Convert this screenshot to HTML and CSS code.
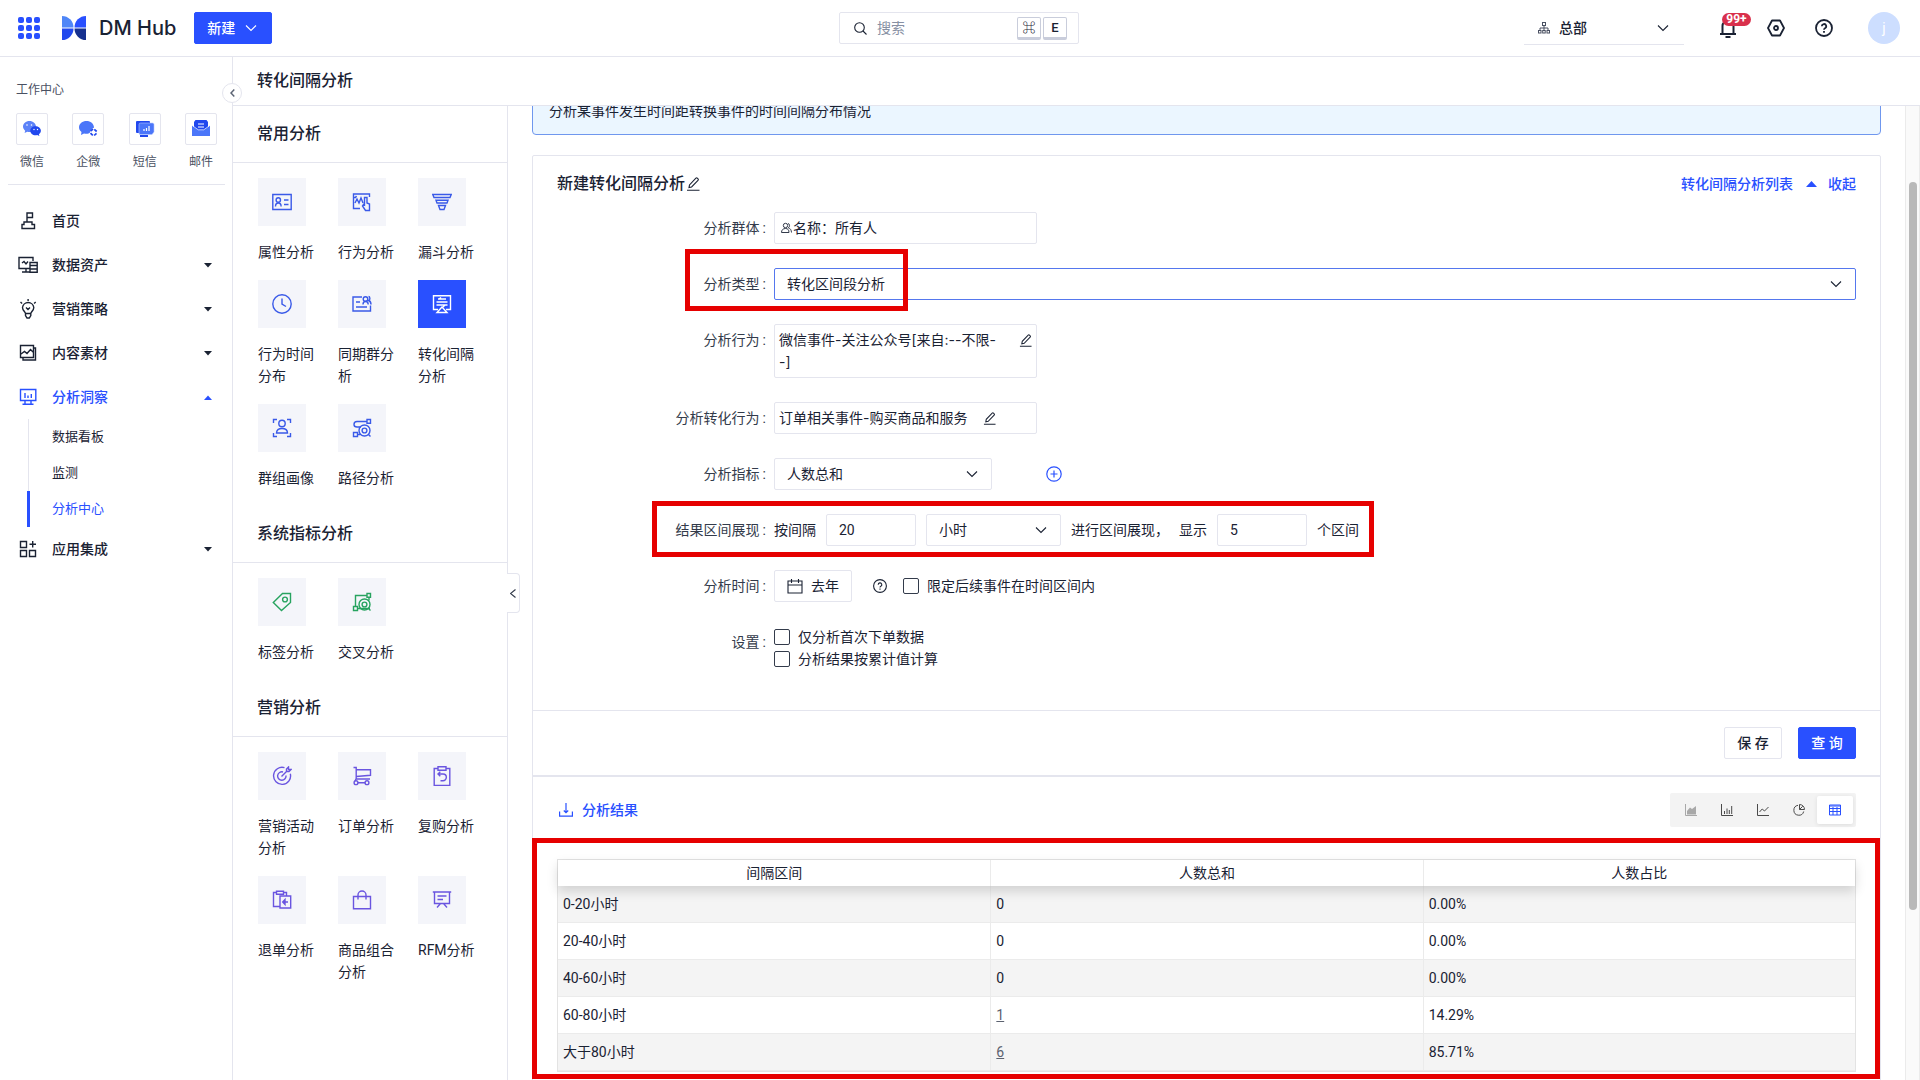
FILE: index.html
```html
<!DOCTYPE html>
<html lang="zh-CN">
<head>
<meta charset="utf-8">
<meta name="viewport" content="width=device-width, initial-scale=1">
<title>转化间隔分析 - DM Hub</title>
<link rel="stylesheet" href="styles.css">
</head>
<body>
<svg class="defs" aria-hidden="true">
  <symbol id="chevron" viewBox="0 0 12 12"><path d="M1 3.5l5 5 5-5"/></symbol>
  <symbol id="pencil" viewBox="0 0 14 14"><path d="M1 13.2h12.5M3 10.6l.5-2.7L9.900 1.200a1 1 0 0 1 1.400 0l.7.700a1 1 0 0 1 0 1.400L5.600 10z"/></symbol>
  <symbol id="caret" viewBox="0 0 8 5"><path d="M0 0h8L4 4.500z"/></symbol>
</svg>

<header class="topbar">
  <div class="topbar-left">
    <button class="icon-btn apps" aria-label="应用">
      <svg width="22" height="22" viewBox="0 0 22 22" fill="#2950ff"><rect width="6" height="6" rx="2"/><rect x="8" width="6" height="6" rx="2"/><rect x="16" width="6" height="6" rx="2"/><rect y="8" width="6" height="6" rx="2"/><rect x="8" y="8" width="6" height="6" rx="2"/><rect x="16" y="8" width="6" height="6" rx="2"/><rect y="16" width="6" height="6" rx="2"/><rect x="8" y="16" width="6" height="6" rx="2"/><rect x="16" y="16" width="6" height="6" rx="2"/></svg>
    </button>
    <a class="brand" href="#">
      <svg width="24" height="24" viewBox="0 0 24 24"><path d="M0 0a11.500 11.500 0 0 1 11.500 11.500H0z" fill="#4f86f7"/><path d="M24 0a11.500 11.500 0 0 0-11.500 11.500H24z" fill="#2950ff"/><path d="M0 24a11.500 11.500 0 0 0 11.500-11.500H0z" fill="#2148ee"/><path d="M24 24a11.500 11.500 0 0 1-11.500-11.500H24z" fill="#16318f"/></svg>
      <span>DM Hub</span>
    </a>
    <button class="btn btn-primary btn-new">新建<svg class="line" width="12" height="12"><use href="#chevron"/></svg></button>
  </div>
  <label class="search">
    <svg class="line" width="13" height="13" viewBox="0 0 13 13"><circle cx="5.500" cy="5.500" r="4.800"/><path d="M9 9l3.500 3.500"/></svg>
    <input type="text" placeholder="搜索" aria-label="搜索">
    <kbd>⌘</kbd><kbd>E</kbd>
  </label>
  <div class="topbar-right">
    <button class="org">
      <svg width="12" height="12" viewBox="0 0 12 12" fill="none" stroke="#4a5162"><rect x="4.500" y=".5" width="3" height="3"/><path d="M6 3.500V9M2 8.500V6h8v2.500"/><rect x=".5" y="8.500" width="2.500" height="2.500"/><rect x="4.700" y="8.500" width="2.500" height="2.500"/><rect x="9" y="8.500" width="2.500" height="2.500"/></svg>
      <span>总部</span>
      <svg class="line" width="12" height="12"><use href="#chevron"/></svg>
    </button>
    <button class="icon-btn bell" aria-label="通知">
      <svg width="18" height="20" viewBox="0 0 18 20" fill="none" stroke="#1a2233" stroke-width="2"><path d="M1 16h16M3.500 16V8a5.500 5.500 0 0 1 11 0v8M6.500 19h5"/></svg>
      <span class="badge">99+</span>
    </button>
    <button class="icon-btn gear" aria-label="设置">
      <svg width="18" height="18" viewBox="0 0 18 18" fill="none" stroke="#1a2233" stroke-width="1.800"><path d="M5 1.500h8L17 9l-4 7.500H5L1 9z" stroke-linejoin="round"/><circle cx="9" cy="9" r="2"/></svg>
    </button>
    <button class="icon-btn help" aria-label="帮助">
      <svg width="18" height="18" viewBox="0 0 18 18" fill="none" stroke="#1a2233" stroke-width="1.800"><circle cx="9" cy="9" r="8"/><path d="M6.800 7.200a2.200 2.200 0 1 1 3.200 2c-.700.400-1 .700-1 1.500M9 12v1.800"/></svg>
    </button>
    <button class="avatar">j</button>
  </div>
</header>

<div class="shell">
  <aside class="sidebar">
    <button class="fold" aria-label="收起菜单"><svg width="5" height="8" viewBox="0 0 5 8"><path d="M4.300.6L1 4l3.300 3.400" fill="none" stroke="#5c6474" stroke-width="1.500"/></svg></button>
    <h2 class="work-title">工作中心</h2>
    <div class="works">
      <a href="#"><span class="work-icon"><svg width="20" height="18" viewBox="0 0 20 18"><path d="M7.500 1C3.700 1 1 3.500 1 6.500c0 1.700.9 3.200 2.200 4.200L2.600 13l2.700-1.300c.7.200 1.400.3 2.200.3C11 12 14 9.500 14 6.500S11 1 7.500 1z" fill="#5c82f8"/><path d="M13.500 6.200C10.600 6.200 8.300 8.200 8.300 10.700s2.300 4.500 5.200 4.500c.6 0 1.200-.1 1.700-.2l2.200 1-.5-1.800c1.200-.8 2-2 2-3.500 0-2.500-2.500-4.500-5.400-4.500z" fill="#2148ee"/><g fill="#fff"><circle cx="5" cy="5" r=".8"/><circle cx="9.500" cy="5" r=".8"/><circle cx="12" cy="9.500" r=".7"/><circle cx="15.500" cy="9.500" r=".7"/></g></svg></span>微信</a>
      <a href="#"><span class="work-icon"><svg width="20" height="18" viewBox="0 0 20 18"><path d="M8.500 1C4.500 1 1 3.700 1 7.300c0 2 1 3.700 2.500 4.800L3 15l3-1.600c3 .8 5 0 6-1 0-2 2-4.400 4-4.600C16 3.700 12.500 1 8.500 1z" fill="#4b76f9"/><g fill="none" stroke="#2148ee" stroke-width="1.700"><path d="M12.500 11.200l2.500-2.200M16.300 9.300l2.400 2.200M18.500 13.300l-2.300 2.200M14.800 15.300l-2.300-2.200"/></g></svg></span>企微</a>
      <a href="#"><span class="work-icon"><svg width="20" height="18" viewBox="0 0 20 18"><rect x="1" y="1" width="14" height="12" rx="1" fill="#2148ee"/><path d="M5 15h8v2H5z" fill="#2148ee"/><path d="M5.500 3h12A1.500 1.500 0 0 1 19 4.500V12l-2 2.500H5.500A1.500 1.500 0 0 1 4 13V4.500A1.500 1.500 0 0 1 5.500 3z" fill="#4b76f9" stroke="#b5c7ff" stroke-width=".6"/><path d="M9 11V9M11.500 11V8M14 11V6" stroke="#fff" stroke-width="1.200"/></svg></span>短信</a>
      <a href="#"><span class="work-icon"><svg width="20" height="18" viewBox="0 0 20 18"><path d="M4.500 0h11L17 2v9H3V2z" fill="#2148ee"/><path d="M7 4h6M7 7h6" stroke="#fff" stroke-width="1.200"/><path d="M1 5.500l6 4.500h6l6-4.500V16H1z" fill="#4b76f9"/><path d="M1.300 5.500l5.900 4.300h5.600l5.900-4.300" fill="none" stroke="#fff" stroke-width=".7"/></svg></span>邮件</a>
    </div>
    <nav class="nav">
      <a class="nav-item" href="#"><svg width="20" height="20" viewBox="0 0 20 20"><path d="M9 11V2h5.500v4.500H9M4 17.500v-4h2V11h8v2.500h2.500v4z"/></svg><span>首页</span></a>
      <a class="nav-item" href="#"><svg width="20" height="20" viewBox="0 0 20 20"><path d="M12 13.500H1v-11h14V6M4 17h8M8 13.500V17M4 8l2-1.500L8 9l2-2.500M12 7.500h7.200v9.800H12zM12 10.500h7.200M12 14h7.200"/></svg><span>数据资产</span><svg class="caret" width="8" height="5"><use href="#caret"/></svg></a>
      <a class="nav-item" href="#"><svg width="20" height="20" viewBox="0 0 20 20"><path d="M7.500 14.500c0-1.500-3-3-3-6a5.700 5.700 0 0 1 11.300 0c0 3-3 4.500-3 6zM7.500 14.500v2l1.500 2.500h2.300l1.500-2.500v-2M8 8.500l2 2 2-2M10.100 0v2M2.500 3l1.600 1.500M17.700 3l-1.600 1.500"/></svg><span>营销策略</span><svg class="caret" width="8" height="5"><use href="#caret"/></svg></a>
      <a class="nav-item" href="#"><svg width="20" height="20" viewBox="0 0 20 20"><path d="M2.500 2.500h13v12h-13zM15.500 5h2v12H5v-2.500M3 11l3.500-2.500L9 10.500l3.500-4 3 3"/></svg><span>内容素材</span><svg class="caret" width="8" height="5"><use href="#caret"/></svg></a>
      <a class="nav-item active" href="#"><svg width="20" height="20" viewBox="0 0 20 20"><path d="M2.500 2.500h15.300v11H2.500zM7 13.500V17M13 13.500V17M4.500 17.300h11M7 6v5M10 8.500V11M13.300 7v4"/></svg><span>分析洞察</span><svg class="caret up" width="8" height="5"><use href="#caret"/></svg></a>
      <div class="subnav">
        <a href="#">数据看板</a>
        <a href="#">监测</a>
        <a class="current" href="#">分析中心</a>
      </div>
      <a class="nav-item" href="#"><svg width="20" height="20" viewBox="0 0 20 20"><path d="M2.500 2.500h6v6h-6zM2.500 11.500h6v6h-6zM11.500 11.500h6v6h-6zM14.700 2v6.500M11.500 5.200H18"/></svg><span>应用集成</span><svg class="caret" width="8" height="5"><use href="#caret"/></svg></a>
    </nav>
  </aside>

  <main class="page">
    <h1 class="page-title">转化间隔分析</h1>
    <div class="page-body">
      <section class="catalog">
        <button class="catalog-fold" aria-label="收起分类"><svg width="6" height="9" viewBox="0 0 6 9"><path d="M5.500.5l-5 4 5 4" fill="none" stroke="#333b4b" stroke-width="1.200"/></svg></button>
        <h2>常用分析</h2>
        <div class="tiles">
          <a href="#"><span class="tile"><svg width="20" height="20" viewBox="0 0 20 20"><path d="M.8 2.500h18.400v15H.8zM3.500 14.500c0-2 1-3.500 2.800-3.500s2.800 1.500 2.800 3.500M12 8h4.500M12 12.500h4.500"/><circle cx="6.300" cy="8" r="2.200"/></svg></span>属性分析</a>
          <a href="#"><span class="tile"><svg width="20" height="20" viewBox="0 0 20 20"><path d="M8 16.500H1.500V2h16v3M1.500 5.500h2l1-1.500M3 11l2-4 2 4 2-5 2 5M12.500 13V5.500h2.500V11l2.500 1v6.500h-4L10.500 14l1-1.500z"/></svg></span>行为分析</a>
          <a href="#"><span class="tile"><svg width="20" height="20" viewBox="0 0 20 20"><path d="M.8 2.500h18.400l-1.200 3H2zM4 8.300h12l-1 2.700H5zM6.500 13.500h7l-1.500 4H8z"/></svg></span>漏斗分析</a>
          <a href="#"><span class="tile"><svg width="20" height="20" viewBox="0 0 20 20"><circle cx="10" cy="10" r="9.200"/><path d="M10 4.500V10l4 2.500"/></svg></span>行为时间分布</a>
          <a href="#"><span class="tile"><svg width="20" height="20" viewBox="0 0 20 20"><path d="M10 3H1v14h17.500v-5.500M4 8h4M4 13h11M11 10.500c0-2 1-3 2.500-3s2.700 1 2.700 3M16.500 2.500c1.500 0 2.200 3.500 0 4 1.700.5 2.500 1.500 2.500 4"/><circle cx="13.500" cy="5" r="2.300"/></svg></span>同期群分析</a>
          <a href="#" class="selected"><span class="tile"><svg width="20" height="20" viewBox="0 0 20 20"><path d="M6 15.500H1.500V1.800h17v13.700H14M4.500 8h11M6 5h8M4.500 11h11M7 5l2-1.500M13 11l-2 2M10 13l-5 5.500h10z"/></svg></span>转化间隔分析</a>
          <a href="#"><span class="tile"><svg width="20" height="20" viewBox="0 0 20 20"><path d="M1.500 5V1.500H5M15 1.500h3.500V5M1.500 15v3.500H5M15 18.500h3.500V15M4.500 15c0-3 2-4.500 5.500-4.500s5.500 1.500 5.500 4.500z"/><circle cx="10" cy="5.500" r="3.200"/></svg></span>群组画像</a>
          <a href="#"><span class="tile"><svg width="20" height="20" viewBox="0 0 20 20"><path d="M15 1.500h3.500v3.800H15zM1.500 14.500h4v4h-4zM15 3.500H5a3 3 0 0 0-3 3c0 2 1.500 2.500 3 2.500h4M5.500 16.500H8M16.500 16.500l2 2"/><circle cx="12.500" cy="12.500" r="5.500"/><circle cx="12.500" cy="12.500" r="2.400"/></svg></span>路径分析</a>
        </div>
        <h2>系统指标分析</h2>
        <div class="tiles green">
          <a href="#"><span class="tile"><svg width="20" height="20" viewBox="0 0 20 20"><path d="M1.300 10.500L10.500 1.500h8v9l-9 8z"/><circle cx="13" cy="7.500" r="2.400"/></svg></span>标签分析</a>
          <a href="#"><span class="tile"><svg width="20" height="20" viewBox="0 0 20 20"><path d="M15 1.500h3.500v3.800H15zM1.500 14.500h4v4h-4zM15 3.500H3.500v11M17 5.500v3M5.500 16.500H18M16.500 16.500l2 2"/><circle cx="12.500" cy="12.500" r="5.500"/><circle cx="12.500" cy="12.500" r="2.400"/></svg></span>交叉分析</a>
        </div>
        <h2>营销分析</h2>
        <div class="tiles purple">
          <a href="#"><span class="tile"><svg width="20" height="20" viewBox="0 0 20 20"><path d="M12.500 1.700a8.500 8.500 0 1 0 5.800 6M11 6a4.200 4.200 0 1 0 3 3.500M9.500 10.500l5-5M14.500 5.500V3l2-2v2.500H19l-2 2z"/></svg></span>营销活动分析</a>
          <a href="#"><span class="tile"><svg width="20" height="20" viewBox="0 0 20 20"><path d="M1.500 1.500h2.700v11.500H18M4.200 3.800h14.300v5.500L4.200 10.500M4 13l-1 2M6 16.700h7"/><circle cx="4" cy="16.700" r="1.900"/><circle cx="15" cy="16.700" r="1.900"/></svg></span>订单分析</a>
          <a href="#"><span class="tile"><svg width="20" height="20" viewBox="0 0 20 20"><path d="M6 2.500H2.200v17h15.600v-17H14M6 .8h8v3.400H6zM6 8h5a3.300 3.300 0 0 1 0 6.700H8.500M8.300 5.800L6 8l2.300 2.300"/></svg></span>复购分析</a>
          <a href="#"><span class="tile"><svg width="20" height="20" viewBox="0 0 20 20"><path d="M7.500 16.500H1.500v-14h3M11.500 2.500H14.500V6M4.500 1.200h7v3h-7zM8 6h10.700v12H8zM16 12h-5M13 9.500L10.700 12l2.300 2.500z"/></svg></span>退单分析</a>
          <a href="#"><span class="tile"><svg width="20" height="20" viewBox="0 0 20 20"><path d="M1.500 6.500h17v12.300h-17zM6 9.500V5a4 4 0 0 1 8 0v4.500"/></svg></span>商品组合分析</a>
          <a href="#" class="single"><span class="tile"><svg width="20" height="20" viewBox="0 0 20 20"><path d="M.8 2h18.400M2.500 2v11.500h15V2M5.500 6h9M5.500 9.500h5.500M8.500 13.500l-3.500 4M11.500 13.500l3.500 4"/></svg></span>RFM分析</a>
        </div>
      </section>

      <section class="content">
        <div class="notice">分析某事件发生时间距转换事件的时间间隔分布情况</div>
        <div class="card">
          <div class="card-head">
            <h2>新建转化间隔分析<svg class="line" width="14" height="14"><use href="#pencil"/></svg></h2>
            <div class="card-links">
              <a href="#">转化间隔分析列表</a>
              <a href="#"><svg width="11" height="6" viewBox="0 0 11 6"><path d="M0 6l5.500-6L11 6z" fill="#2950ff"/></svg>收起</a>
            </div>
          </div>
          <form class="form">
            <div class="row">
              <span class="label">分析群体</span>
              <div class="box box-wide people"><svg width="11" height="12" viewBox="0 0 11 12" fill="none" stroke="#333b4b"><circle cx="4.500" cy="3.500" r="2.200"/><path d="M.5 10.500c0-2.500 1.500-4 4-4s3.500 1.500 3.500 4zM7 1.500c2 .2 2 3.500.3 4.300 2 .6 3 2 3.200 4.700"/></svg>名称：所有人</div>
            </div>
            <div class="row">
              <label class="label" for="type">分析类型</label>
              <div class="select focus"><select id="type"><option>转化区间段分析</option></select><svg class="line" width="12" height="12"><use href="#chevron"/></svg></div>
              <i class="mark mark-type"></i>
            </div>
            <div class="row top">
              <span class="label">分析行为</span>
              <div class="box box-wide event"><span>微信事件-关注公众号[来自:--不限-<br>-]</span><svg class="line" width="13" height="13"><use href="#pencil"/></svg></div>
            </div>
            <div class="row">
              <span class="label">分析转化行为</span>
              <div class="box box-wide target"><span>订单相关事件-购买商品和服务</span><svg class="line" width="13" height="13"><use href="#pencil"/></svg></div>
            </div>
            <div class="row">
              <label class="label" for="metric">分析指标</label>
              <div class="select select-metric"><select id="metric"><option>人数总和</option></select><svg class="line" width="12" height="12"><use href="#chevron"/></svg></div>
              <button type="button" class="icon-btn add" aria-label="添加指标"><svg width="16" height="16" viewBox="0 0 16 16" fill="none" stroke="#2950ff" stroke-width="1.200"><circle cx="8" cy="8" r="7.200"/><path d="M8 4.500v7M4.500 8h7"/></svg></button>
            </div>
            <div class="row">
              <span class="label">结果区间展现</span>
              <div class="range">
                <label for="step">按间隔</label>
                <input id="step" type="text" value="20">
                <div class="select select-unit"><select aria-label="单位"><option>小时</option></select><svg class="line" width="12" height="12"><use href="#chevron"/></svg></div>
                <span>进行区间展现，</span>
                <label for="count">显示</label>
                <input id="count" type="text" value="5">
                <span>个区间</span>
              </div>
              <i class="mark mark-range"></i>
            </div>
            <div class="row">
              <span class="label">分析时间</span>
              <button type="button" class="btn btn-date"><svg class="line" width="16" height="16" viewBox="0 0 16 16"><path d="M1 3h14v12H1zM1 7h14M4.500 1v4M11.500 1v4"/></svg>去年</button>
              <svg class="line hint" width="14" height="14" viewBox="0 0 14 14"><circle cx="7" cy="7" r="6.400"/><path d="M5.200 5.700a1.800 1.800 0 1 1 2.600 1.600c-.6.300-.8.600-.8 1.200M7 9.500v1.200"/></svg>
              <label class="check"><input type="checkbox">限定后续事件在时间区间内</label>
            </div>
            <div class="row top">
              <span class="label">设置</span>
              <div class="checks">
                <label class="check"><input type="checkbox">仅分析首次下单数据</label>
                <label class="check"><input type="checkbox">分析结果按累计值计算</label>
              </div>
            </div>
          </form>
          <div class="actions">
            <button class="btn">保 存</button>
            <button class="btn btn-primary">查 询</button>
          </div>
          <div class="result-head">
            <a href="#"><svg width="14" height="14" viewBox="0 0 14 14" fill="none" stroke="#2950ff" stroke-width="1.200"><path d="M.6 8.500v4.700h12.800V8.500M7 0v9.500M4.800 7.500L7 9.700l2.200-2.200"/></svg>分析结果</a>
            <div class="chart-types">
              <button aria-label="面积图" class="off"><svg width="12" height="12" viewBox="0 0 12 12"><path d="M.5 0v11.500H12"/><path d="M2 10.500V7l3-3.500 2 1.500 4-3v8.500z" class="solid"/></svg></button>
              <button aria-label="柱状图"><svg width="12" height="12" viewBox="0 0 12 12"><path d="M.5 0v11.500H12M3.500 10V7M6 10V4.500M8.300 10V6M10.700 10V2"/></svg></button>
              <button aria-label="折线图"><svg width="12" height="12" viewBox="0 0 12 12"><path d="M.5 0v11.500H12M2.500 8l2.700-3 2.300 2L11.500 3"/></svg></button>
              <button aria-label="饼图"><svg width="12" height="12" viewBox="0 0 12 12"><path d="M5 1.300a5 5 0 1 0 5.700 6.200"/><path d="M6.500.5v5h5A5 5 0 0 0 6.500.5zM6.500 5.500l3.200-3.200"/></svg></button>
              <button aria-label="表格" class="on"><svg width="12" height="12" viewBox="0 0 12 12"><path d="M.5 1h11v10H.5zM.5 2h11M.5 4.500h11M.5 7.500h11M4 3v8M8 3v8"/></svg></button>
            </div>
          </div>
          <div class="result">
            <i class="mark mark-result"></i>
            <table>
              <thead><tr><th>间隔区间</th><th>人数总和</th><th>人数占比</th></tr></thead>
              <tbody>
                <tr><td>0-20小时</td><td>0</td><td>0.00%</td></tr>
                <tr><td>20-40小时</td><td>0</td><td>0.00%</td></tr>
                <tr><td>40-60小时</td><td>0</td><td>0.00%</td></tr>
                <tr><td>60-80小时</td><td><a href="#">1</a></td><td>14.29%</td></tr>
                <tr><td>大于80小时</td><td><a href="#">6</a></td><td>85.71%</td></tr>
              </tbody>
            </table>
          </div>
        </div>
      </section>
      <div class="scrollbar"><i></i></div>
    </div>
  </main>
</div>
</body>
</html>
```
FILE: styles.css
```css
:root {
  --ink: #1a2233;
  --blue: #2950ff;
  --line: #e4e5ee;
  --red: #e60000;
}
* { box-sizing: border-box; }
body {
  margin: 0;
  height: 100vh;
  display: flex;
  flex-direction: column;
  overflow: hidden;
  background: #fff;
  color: var(--ink);
  font: 14px/22px Roboto, "Noto Sans CJK SC", sans-serif;
}
h1, h2 { margin: 0; font-size: 16px; font-weight: 500; line-height: 24px; }
a { color: inherit; text-decoration: none; }
button, input, select { font: inherit; color: inherit; }
button { padding: 0; border: 0; background: none; }
svg { flex: none; display: block; }
.defs { position: absolute; width: 0; height: 0; }
.line { fill: none; stroke: currentColor; stroke-width: 1.1; }
.icon-btn { position: relative; display: flex; }

.btn {
  height: 32px;
  padding: 0 12px;
  border: 1px solid var(--line);
  border-radius: 2px;
  background: #fff;
  font-weight: 500;
}
.btn-primary { background: var(--blue); border-color: var(--blue); color: #fff; }

/* top bar */
.topbar {
  flex: none;
  display: grid;
  grid-template-columns: 1fr 240px 1fr;
  align-items: center;
  height: 57px;
  padding: 0 20px 0 18px;
  border-bottom: 1px solid var(--line);
}
.topbar-left, .topbar-right { display: flex; align-items: center; }
.topbar-right { justify-content: flex-end; }
.brand {
  display: flex;
  align-items: center;
  gap: 13px;
  margin: 0 18px 0 22px;
  font: 500 20px/28px Inter, sans-serif;
}
.btn-new { display: flex; align-items: center; gap: 10px; padding: 0 14px 0 12px; }
.search {
  display: flex;
  align-items: center;
  gap: 2px;
  height: 32px;
  padding: 0 11px 0 14px;
  border: 1px solid var(--line);
  border-radius: 2px;
}
.search input { flex: 1; min-width: 0; padding: 0 8px; border: 0; outline: 0; background: none; }
.search input::placeholder { color: #8790a3; opacity: 1; }
kbd {
  width: 24px;
  height: 23px;
  border: 1px solid #c9cddb;
  border-bottom-width: 3px;
  border-radius: 2px;
  font: 500 13px/19px Roboto, "Noto Sans CJK SC", "DejaVu Sans", sans-serif;
  text-align: center;
}
.org {
  display: flex;
  align-items: center;
  gap: 9px;
  width: 160px;
  height: 33px;
  padding: 0 15px 0 14px;
  border-bottom: 1px solid var(--line);
  font-weight: 500;
}
.org span { flex: 1; text-align: left; }
.bell { margin-left: 35px; }
.badge {
  position: absolute;
  top: -5px;
  left: 3px;
  width: 29px;
  height: 13px;
  border-radius: 7px;
  background: #d9304c;
  color: #fff;
  font: 700 12px/13px Roboto, sans-serif;
}
.gear, .help { margin-left: 30px; }
.avatar {
  width: 32px;
  height: 32px;
  margin-left: 35px;
  border-radius: 50%;
  background: #cddeff;
  color: #fff;
}

.shell { flex: 1; min-height: 0; display: flex; }

/* side navigation */
.sidebar {
  position: relative;
  flex: none;
  width: 233px;
  border-right: 1px solid var(--line);
}
.fold {
  position: absolute;
  z-index: 2;
  top: 26px;
  right: -10px;
  width: 20px;
  height: 20px;
  display: grid;
  place-items: center;
  border: 1px solid var(--line);
  border-radius: 50%;
  background: #fff;
}
.work-title { margin: 24px 16px 14px; font-size: 12px; line-height: 18px; font-weight: 400; color: #4a5162; }
.works {
  display: flex;
  justify-content: space-between;
  margin: 0 7px 0 8px;
  padding: 0 8px 13px;
  border-bottom: 1px solid var(--line);
  font-size: 12px;
  line-height: 18px;
  text-align: center;
  color: #4a5162;
}
.work-icon {
  display: grid;
  place-items: center;
  width: 32px;
  height: 32px;
  margin-bottom: 8px;
  border: 1px solid var(--line);
  border-radius: 2px;
}
.nav { padding-top: 14px; }
.nav-item {
  display: flex;
  align-items: center;
  gap: 14px;
  height: 44px;
  padding: 0 20px 0 18px;
  font-weight: 500;
}
.nav-item svg { fill: none; stroke: currentColor; stroke-width: 1.4; }
.nav-item span { flex: 1; }
.nav-item .caret { fill: currentColor; stroke: none; }
.nav-item .up { transform: rotate(180deg); }
.active, .subnav .current { color: var(--blue); }
.subnav { margin-left: 28px; border-left: 1px solid var(--line); }
.subnav a { display: block; padding-left: 23px; font-size: 13px; line-height: 36px; }
.subnav .current { margin-left: -2px; padding-left: 22px; border-left: 3px solid var(--blue); }

/* page frame */
.page { flex: 1; min-width: 0; display: flex; flex-direction: column; }
.page-title { flex: none; padding: 12px 24px; border-bottom: 1px solid var(--line); }
.page-body { flex: 1; min-height: 0; display: flex; }

/* analysis catalog */
.catalog { position: relative; flex: none; width: 275px; border-right: 1px solid var(--line); }
.catalog h2 { padding: 16px 24px; border-bottom: 1px solid var(--line); }
.tiles {
  --accent: #3a5ae8;
  display: grid;
  grid-template-columns: repeat(3, 56px);
  gap: 17px 24px;
  padding: 15px 25px 17px;
}
.single { white-space: nowrap; }
.green { --accent: #27a35f; }
.purple { --accent: #6a55e0; }
.tile {
  display: grid;
  place-items: center;
  width: 48px;
  height: 48px;
  margin-bottom: 15px;
  background: #f4f5fa;
}
.tile svg { fill: none; stroke: var(--accent); stroke-width: 1.4; }
.selected .tile { background: var(--blue); }
.selected .tile svg { stroke: #fff; }
.catalog-fold {
  position: absolute;
  z-index: 2;
  top: 467px;
  right: -13px;
  width: 13px;
  height: 40px;
  display: grid;
  place-items: center;
  border: 1px solid var(--line);
  border-left: 0;
  border-radius: 0 4px 4px 0;
  background: #fff;
}

/* main column */
.content { flex: 1; min-width: 0; padding: 0 24px; overflow: hidden; }
.notice {
  margin: -19px 0 20px;
  padding: 12px 16px;
  border: 1px solid #6f97ee;
  border-radius: 4px;
  background: #ebf6ff;
}
.card { border: 1px solid var(--line); border-radius: 2px; padding-bottom: 40px; }
.card-head { display: flex; justify-content: space-between; padding: 16px 24px; }
.card-head h2 { display: flex; align-items: center; gap: 1px; }
.card-links { display: flex; gap: 13px; color: var(--blue); font-weight: 500; }
.card-links a { display: flex; align-items: center; gap: 11px; }

.form { display: grid; gap: 24px; padding: 0 24px 40px; border-bottom: 1px solid var(--line); }
.row { position: relative; display: flex; align-items: center; }
.top { align-items: flex-start; }
.label { flex: none; width: 217px; padding-right: 8px; line-height: 32px; text-align: right; color: #333b4b; }
.label::after { content: ":"; margin-left: 3px; }
.box {
  display: flex;
  align-items: center;
  min-height: 32px;
  padding: 4px;
  border: 1px solid var(--line);
  border-radius: 2px;
  font-family: Inter, "Noto Sans CJK SC", sans-serif;
}
.box-wide { width: 263px; }
.people { padding-left: 6px; gap: 1px; }
.event { align-items: flex-start; justify-content: space-between; }
.event svg { margin-top: 5px; }
.target { gap: 16px; }
.select { flex: 1; display: grid; align-items: center; border: 1px solid var(--line); border-radius: 2px; }
.select select {
  grid-area: 1 / 1;
  width: 100%;
  height: 30px;
  padding: 0 12px;
  border: 0;
  outline: 0;
  background: none;
  appearance: none;
}
.select svg { grid-area: 1 / 1; justify-self: end; margin-right: 13px; pointer-events: none; }
.focus { border-color: #5577ee; }
.select-metric { flex: none; width: 218px; }
.add { margin-left: 54px; }
.range { display: flex; align-items: center; gap: 10px; }
.range input { width: 90px; height: 32px; padding: 0 12px; border: 1px solid var(--line); border-radius: 2px; }
.select-unit { flex: none; width: 135px; }
.btn-date { display: flex; align-items: center; gap: 8px; font-weight: 400; }
.hint { margin: 0 16px 0 21px; }
.check { display: flex; align-items: center; gap: 8px; }
.check input {
  appearance: none;
  width: 16px;
  height: 16px;
  margin: 0;
  border: 1px solid #333b4b;
  border-radius: 2px;
  background: #fff;
}

.actions {
  display: flex;
  justify-content: flex-end;
  gap: 16px;
  padding: 16px 24px;
  border-bottom: 2px solid var(--line);
}
.actions .btn { width: 58px; padding: 0; }
.result-head { display: flex; align-items: center; justify-content: space-between; padding: 16px 24px 11px 26px; }
.result-head a { display: flex; align-items: center; gap: 9px; color: var(--blue); font-weight: 500; }
.chart-types { display: flex; padding: 3px; background: #f3f3f3; border-radius: 2px; }
.chart-types button { display: grid; place-items: center; width: 36px; height: 28px; color: #4a4a4a; }
.chart-types svg { fill: none; stroke: currentColor; }
.chart-types .solid { fill: currentColor; stroke: none; }
.chart-types .off { color: #a8a8a8; }
.chart-types .on { background: #fff; color: var(--blue); border-radius: 2px; box-shadow: 0 1px 4px #00000018; }

.result { position: relative; padding: 21px 24px 0; }
table { width: 100%; table-layout: fixed; border-spacing: 0; border: 1px solid #e3e3e3; }
thead { position: relative; box-shadow: 0 5px 12px #00000026; }
th { height: 26px; padding: 0; font-weight: 400; line-height: 22px; background: #fff; }
td { height: 37px; padding: 0 5px; border-bottom: 1px solid #ebebeb; }
th + th, td + td { border-left: 1px solid #ebebeb; }
tbody tr:nth-child(odd) { background: #f4f4f4; }
td a { color: #5c6270; text-decoration: underline; }

/* highlight frames laid over the form and the result */
.mark { position: absolute; z-index: 3; border: 5px solid var(--red); pointer-events: none; }
.mark-type { top: -19px; left: 128px; width: 223px; height: 62px; }
.mark-range { top: -13px; left: 95px; width: 722px; height: 56px; }
.mark-result { inset: 0 0 -7px -1px; }

.scrollbar { flex: none; width: 15px; padding: 0 3px; border: 1px solid #ebebeb; border-width: 0 1px; background: #fafafa; }
.scrollbar i { display: block; position: relative; top: 7.8%; width: 8px; height: 74.700%; border-radius: 4px; background: #b9b9b9; }
```
